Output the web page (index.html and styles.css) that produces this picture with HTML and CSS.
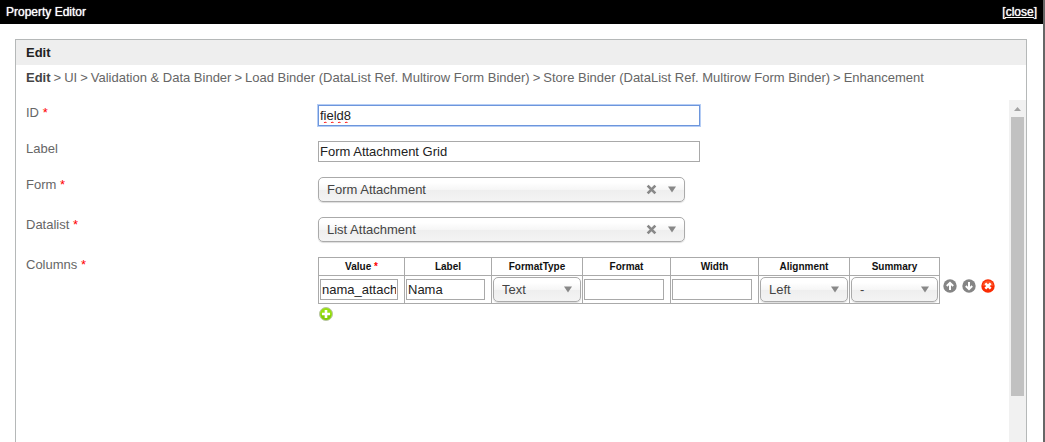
FILE: index.html
```html
<!DOCTYPE html>
<html lang="en">
<head>
<meta charset="utf-8">
<title>Property Editor</title>
<link rel="stylesheet" href="styles.css">
</head>
<body>
<svg class="symbols" aria-hidden="true">
  <symbol id="arrow" viewBox="0 0 8 7"><path d="M0 0.5h8L4 6.5z" fill="#888"/></symbol>
  <symbol id="cross" viewBox="0 0 10 10"><path d="M1.5 1.5l7 7M8.5 1.5l-7 7" stroke="#888" stroke-width="2.4"/></symbol>
  <symbol id="up" viewBox="0 0 14 14"><circle cx="7" cy="7" r="6.7" fill="#858585"/><path d="M7 11V5M3.8 7L7 3.8L10.2 7" fill="none" stroke="#fff" stroke-width="2"/></symbol>
  <symbol id="down" viewBox="0 0 14 14"><circle cx="7" cy="7" r="6.7" fill="#858585"/><path d="M7 3v6M3.8 7L7 10.2L10.2 7" fill="none" stroke="#fff" stroke-width="2"/></symbol>
  <symbol id="delete" viewBox="0 0 14 14"><circle cx="7" cy="7" r="6.7" fill="#fa2c04"/><path d="M1.5 7a5.5 5.5 0 0 1 11 0z" fill="#ff6a3c" opacity=".6"/><path d="M4.3 4.3l5.4 5.4M9.7 4.3l-5.4 5.4" stroke="#fff" stroke-width="2.5"/></symbol>
  <symbol id="add" viewBox="0 0 14 14"><circle cx="7" cy="7" r="6.5" fill="#98e010" stroke="#b9c4a8"/><path d="M2 8a5 5 0 0 0 10 0z" fill="#6fba00" opacity=".5"/><path d="M7 3v8M3 7h8" stroke="#fff" stroke-width="2.6"/></symbol>
</svg>
<div class="dialog">
  <header class="titlebar"><span>Property Editor</span><a href="#">[close]</a></header>
  <main class="panel">
    <h1 class="panel-title">Edit</h1>
    <nav class="crumbs"><b>Edit</b><span>&gt;</span><span>UI</span><span>&gt;</span><span>Validation &amp; Data Binder</span><span>&gt;</span><span>Load Binder (DataList Ref. Multirow Form Binder)</span><span>&gt;</span><span>Store Binder (DataList Ref. Multirow Form Binder)</span><span>&gt;</span><span>Enhancement</span></nav>
    <div class="content">
      <form class="fields">
        <label class="name" for="id">ID <i>*</i></label>
        <div class="control"><input class="text focused misspelt" id="id" value="field8" spellcheck="false"></div>
        <label class="name" for="label">Label</label>
        <div class="control"><input class="text" id="label" value="Form Attachment Grid"></div>
        <label class="name" for="form">Form <i>*</i></label>
        <div class="control tall"><div class="select"><select id="form"><option>Form Attachment</option></select><button class="clear" type="button" aria-label="Clear form"><svg><use href="#cross"/></svg></button><svg class="arrow"><use href="#arrow"/></svg></div></div>
        <label class="name" for="datalist">Datalist <i>*</i></label>
        <div class="control tall"><div class="select"><select id="datalist"><option>List Attachment</option></select><button class="clear" type="button" aria-label="Clear datalist"><svg><use href="#cross"/></svg></button><svg class="arrow"><use href="#arrow"/></svg></div></div>
        <span class="name">Columns <i>*</i></span>
        <div class="columns">
          <div class="grid-line">
            <table class="grid">
              <thead><tr><th id="c1">Value <i>*</i></th><th id="c2">Label</th><th id="c3">FormatType</th><th id="c4">Format</th><th id="c5">Width</th><th id="c6">Alignment</th><th id="c7">Summary</th></tr></thead>
              <tbody><tr>
                <td><input class="text narrow" aria-labelledby="c1" value="nama_attachment"></td>
                <td><input class="text medium" aria-labelledby="c2" value="Nama"></td>
                <td><div class="select small"><select aria-labelledby="c3"><option>Text</option></select><svg class="arrow"><use href="#arrow"/></svg></div></td>
                <td><input class="text" aria-labelledby="c4"></td>
                <td><input class="text" aria-labelledby="c5"></td>
                <td><div class="select small"><select aria-labelledby="c6"><option>Left</option></select><svg class="arrow"><use href="#arrow"/></svg></div></td>
                <td><div class="select smaller"><select aria-labelledby="c7"><option>-</option></select><svg class="arrow"><use href="#arrow"/></svg></div></td>
              </tr></tbody>
            </table>
            <div class="actions">
              <button class="icon" type="button" aria-label="Move up"><svg><use href="#up"/></svg></button>
              <button class="icon" type="button" aria-label="Move down"><svg><use href="#down"/></svg></button>
              <button class="icon" type="button" aria-label="Delete"><svg><use href="#delete"/></svg></button>
            </div>
          </div>
          <button class="icon add" type="button" aria-label="Add column"><svg><use href="#add"/></svg></button>
        </div>
      </form>
      <div class="scrollbar"><svg class="scroll-up" viewBox="0 0 7 4"><path d="M0 4h7L3.5 0z" fill="#a3a3a3"/></svg><div class="thumb"></div></div>
    </div>
  </main>
</div>
</body>
</html>
```
FILE: styles.css
```css
* { box-sizing: border-box; }
body { margin: 0; background: #666; color: #666; font: 13px/15px "Liberation Sans", Arial, sans-serif; }
i { color: #f00; font-style: normal; }
svg { display: block; }
.symbols { position: absolute; width: 0; height: 0; }
.dialog { display: flex; flex-direction: column; min-height: 100vh; margin-right: 2px; background: #fff; }
.titlebar { display: flex; justify-content: space-between; height: 24px; padding: 0 6px; background: #000; color: #fff; font-size: 12px; line-height: 24px; text-shadow: 0 0 1px #fff; }
.titlebar a { color: #fff; }
.panel { display: flex; flex: 1; flex-direction: column; margin: 15px 16px 0 15px; border: 1px solid #b5b8b8; border-bottom: 0; }
.panel-title { margin: 0; padding: 0 10px; background: #eee; color: #222; font-size: 13px; line-height: 25px; }
.crumbs { display: flex; gap: 3px; padding: 5px 10px 0; height: 35px; white-space: nowrap; }
.crumbs b { color: #444; }
.content { display: flex; flex: 1; }
.fields { display: grid; flex: 1; grid-template-columns: 292px 1fr; align-content: start; padding: 5px 0 0 10px; }
.control { height: 36px; }
.control.tall { height: 40px; }
.control > .text { width: 382px; }
.text { display: block; height: 21px; margin: 0; padding: 1px; border: 1px solid #a9a9a9; border-radius: 0; background: #fff; color: #222; font: inherit; outline: 0; }
.focused { border-color: #6d96dc; box-shadow: 0 0 0 1px #b5cdf5; }
.misspelt { text-decoration: underline wavy #f00 1px; text-decoration-skip-ink: none; }
.select { position: relative; width: 367px; }
.select select { display: block; width: 100%; height: 25px; padding: 0 8px; border: 1px solid #aaa; border-radius: 5px; appearance: none; background: linear-gradient(#fff 20%, #f6f6f6 50%, #eee 52%, #f4f4f4 100%); box-shadow: 0 1px 1px #ddd; color: #444; font: inherit; }
.arrow { position: absolute; top: 9px; right: 9px; width: 8px; height: 7px; pointer-events: none; }
.clear { position: absolute; top: 7px; right: 28px; padding: 0; border: 0; background: none; }
.clear svg { width: 11px; height: 11px; }
.grid-line { display: flex; gap: 3px; }
.grid { border-collapse: collapse; }
.grid th, .grid td { border: 1px solid #aaa; }
.grid th { height: 18px; padding: 1px 0 0; color: #111; font-size: 10px; line-height: 16px; }
.grid td { height: 28px; padding: 1px; }
.grid .text { width: 80px; margin-right: 5px; }
.grid .narrow { width: 78px; }
.grid .medium { width: 79px; }
.select.small { width: 88px; }
.select.smaller { width: 87px; }
.actions { display: flex; gap: 5px; padding-top: 22px; }
.icon { width: 14px; height: 14px; padding: 0; border: 0; background: none; }
.icon svg { width: 14px; height: 14px; }
.add { display: block; margin: 3px 1px; }
.scrollbar { display: flex; flex-direction: column; align-items: center; width: 17px; padding-top: 7px; background: #f1f1f1; }
.scroll-up { width: 7px; height: 4px; margin-bottom: 6px; }
.thumb { width: 13px; height: 279px; background: #c1c1c1; }
```
